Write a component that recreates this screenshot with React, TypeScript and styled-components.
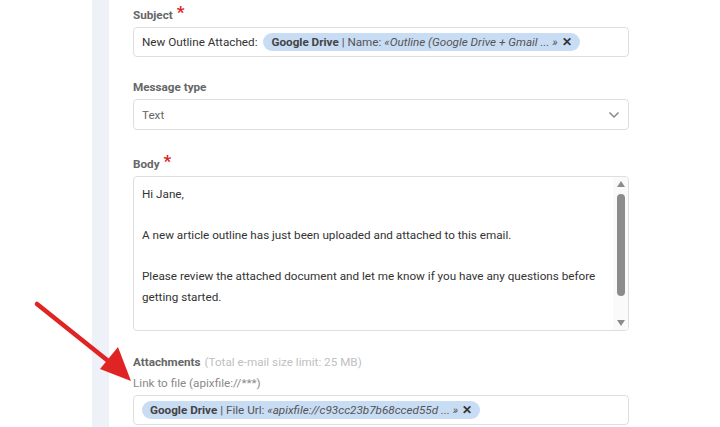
import React from "react";
import styled, { createGlobalStyle } from "styled-components";

const GlobalStyle = createGlobalStyle`
  html, body {
    margin: 0;
    padding: 0;
    background: #ffffff;
    font-family: Roboto, "Liberation Sans", sans-serif;
  }
`;

const Page = styled.div`
  position: relative;
  width: 720px;
  height: 427px;
  overflow: hidden;
  display: flex;
  background: #fff;
`;

const Gutter = styled.div`
  width: 92px;
  flex-shrink: 0;
`;

const Band = styled.div`
  width: 17px;
  flex-shrink: 0;
  background: #eef1f7;
`;

const Form = styled.div`
  width: 496px;
  padding: 7px 0 0 24px;
  display: flex;
  flex-direction: column;
`;

const Field = styled.div<{ $top: number }>`
  margin-top: ${(p) => p.$top}px;
  display: flex;
  flex-direction: column;
`;

const Label = styled.div`
  font-size: 11.7px;
  line-height: 16px;
  height: 16px;
  font-weight: 700;
  color: #666;
  margin-bottom: 4px;
  display: flex;
  align-items: center;
`;

const Required = styled.span`
  color: #d9262a;
  font-size: 17px;
  line-height: 16px;
  margin-left: 4px;
  position: relative;
  top: -3px;
`;

const Hint = styled.span`
  font-weight: 400;
  color: #c0c0c0;
  margin-left: 4px;
`;

const SubLabel = styled.div`
  font-size: 11.7px;
  line-height: 16px;
  color: #8a8a8a;
  margin: 1px 0 4px;
`;

const Box = styled.div<{ $h: number }>`
  height: ${(p) => p.$h}px;
  box-sizing: border-box;
  border: 1px solid #dedede;
  border-radius: 4px;
  background: #fff;
  display: flex;
  align-items: center;
  padding: 0 8px;
  font-size: 11.7px;
  color: #333;
  white-space: nowrap;
`;

const Plain = styled.span`
  margin-right: 6px;
`;

const Chip = styled.span`
  display: inline-flex;
  align-items: center;
  height: 18px;
  padding: 0 8px;
  border-radius: 9px;
  background: #c8dcf3;
  color: #555;
  font-size: 11.7px;
`;

const ChipSource = styled.b`
  color: #444;
  font-weight: 700;
`;

const ChipValue = styled.i`
  color: #555;
`;

const ChipClose = styled.span`
  font-weight: 700;
  color: #333;
  margin-left: 4px;
  font-size: 12px;
`;

const SelectText = styled.span`
  color: #666;
  flex: 1;
`;

const TextArea = styled.div`
  height: 155px;
  box-sizing: border-box;
  border: 1px solid #dedede;
  border-radius: 4px;
  display: flex;
  overflow: hidden;
`;

const TextBody = styled.div`
  flex: 1;
  padding: 7px 8px;
  font-size: 11.7px;
  line-height: 20.5px;
  color: #333;
  white-space: pre;
`;

const ScrollBar = styled.div`
  width: 15px;
  display: flex;
  flex-direction: column;
  align-items: center;
  padding: 4px 0;
  box-sizing: border-box;
  background: #fafafa;
`;

const Thumb = styled.div`
  width: 8px;
  height: 102px;
  border-radius: 4px;
  background: #8c8c8c;
  margin-top: 7px;
`;

const Spacer = styled.div`
  flex: 1;
`;

const Arrow = styled.svg`
  position: absolute;
  left: 0;
  top: 0;
  pointer-events: none;
`;

const body = `Hi Jane,

A new article outline has just been uploaded and attached to this email.

Please review the attached document and let me know if you have any questions before
getting started.`;

export default function App() {
  return (
    <>
      <GlobalStyle />
      <Page>
        <Gutter />
        <Band />
        <Form>
          <Field $top={0}>
            <Label>
              Subject<Required>*</Required>
            </Label>
            <Box $h={30}>
              <Plain>New Outline Attached:</Plain>
              <Chip>
                <ChipSource>Google Drive</ChipSource>&nbsp;| Name:&nbsp;
                <ChipValue>«Outline (Google Drive + Gmail ... »</ChipValue>
                <ChipClose>✕</ChipClose>
              </Chip>
            </Box>
          </Field>

          <Field $top={22}>
            <Label>Message type</Label>
            <Box $h={31}>
              <SelectText>Text</SelectText>
              <svg width="12" height="8" viewBox="0 0 12 8">
                <path d="M1.5 1.5 L6 6 L10.5 1.5" fill="none" stroke="#888" strokeWidth="1.5" />
              </svg>
            </Box>
          </Field>

          <Field $top={26}>
            <Label>
              Body<Required>*</Required>
            </Label>
            <TextArea>
              <TextBody>{body}</TextBody>
              <ScrollBar>
                <svg width="8" height="6" viewBox="0 0 8 6">
                  <path d="M0 6 L4 0 L8 6 Z" fill="#8c8c8c" />
                </svg>
                <Thumb />
                <Spacer />
                <svg width="8" height="6" viewBox="0 0 8 6">
                  <path d="M0 0 L8 0 L4 6 Z" fill="#8c8c8c" />
                </svg>
              </ScrollBar>
            </TextArea>
          </Field>

          <Field $top={23}>
            <Label>
              Attachments<Hint>(Total e-mail size limit: 25 MB)</Hint>
            </Label>
            <SubLabel>Link to file (apixfile://***)</SubLabel>
            <Box $h={30}>
              <Chip>
                <ChipSource>Google Drive</ChipSource>&nbsp;| File Url:&nbsp;
                <ChipValue>«apixfile://c93cc23b7b68cced55d ... »</ChipValue>
                <ChipClose>✕</ChipClose>
              </Chip>
            </Box>
          </Field>
        </Form>

        <Arrow width="720" height="427" viewBox="0 0 720 427">
          <line x1="37" y1="304" x2="112" y2="364" stroke="#e02424" strokeWidth="4.5" strokeLinecap="round" />
          <path d="M131 381 L100 369 L118 347 Z" fill="#e02424" />
        </Arrow>
      </Page>
    </>
  );
}
